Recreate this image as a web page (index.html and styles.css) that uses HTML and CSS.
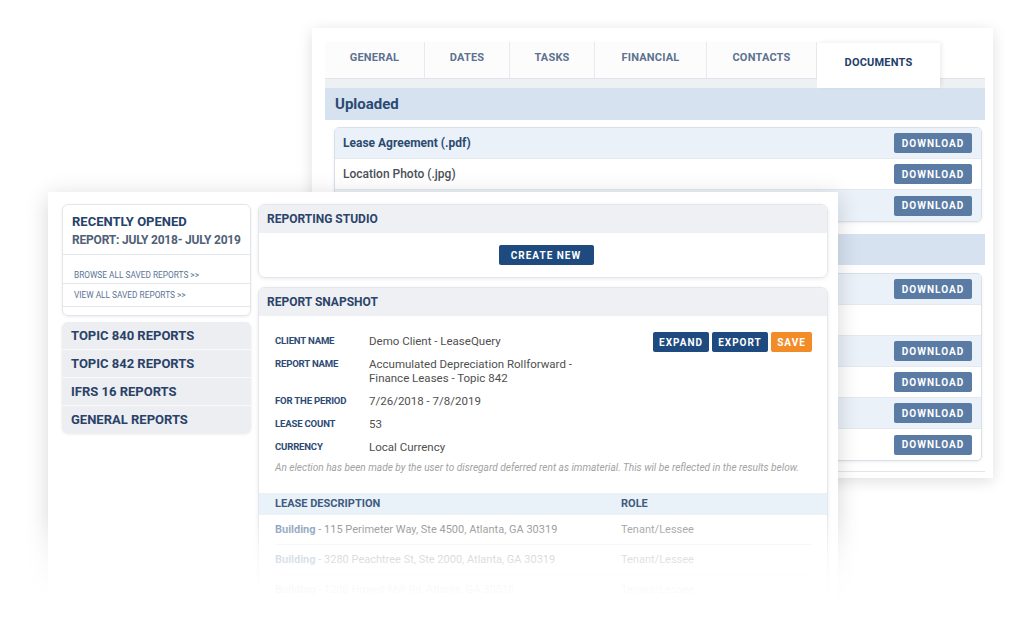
FILE: index.html
```html
<!DOCTYPE html>
<html lang="en">
<head>
    <meta charset="UTF-8">
    <meta name="viewport" content="width=device-width, initial-scale=1.0">
    <title>Reporting Studio</title>
    <link rel="stylesheet" href="styles.css">
</head>
<body>
    <div class="stage">

        <!-- Lease detail window (behind) -->
        <section class="window window-back">
            <nav class="tabs">
                <div class="tab tab-general">GENERAL</div>
                <div class="tab tab-dates">DATES</div>
                <div class="tab tab-tasks">TASKS</div>
                <div class="tab tab-financial">FINANCIAL</div>
                <div class="tab tab-contacts">CONTACTS</div>
                <div class="tab tab-documents active">DOCUMENTS</div>
            </nav>
            <div class="tab-strip"></div>

            <div class="doc-panel">
                <h2 class="panel-title">Uploaded</h2>
                <div class="file-list">
                    <div class="file-row">
                        <span class="file-name strong">Lease Agreement (.pdf)</span>
                        <button class="btn-download">DOWNLOAD</button>
                    </div>
                    <div class="file-row">
                        <span class="file-name">Location Photo (.jpg)</span>
                        <button class="btn-download">DOWNLOAD</button>
                    </div>
                    <div class="file-row">
                        <span class="file-name"></span>
                        <button class="btn-download">DOWNLOAD</button>
                    </div>
                </div>

                <!-- these rows sit under the front window, only their buttons show -->
                <h2 class="panel-title second"></h2>
                <div class="file-list">
                    <div class="file-row">
                        <span class="file-name"></span>
                        <button class="btn-download">DOWNLOAD</button>
                    </div>
                    <div class="file-row">
                        <span class="file-name"></span>
                    </div>
                    <div class="file-row">
                        <span class="file-name"></span>
                        <button class="btn-download">DOWNLOAD</button>
                    </div>
                    <div class="file-row">
                        <span class="file-name"></span>
                        <button class="btn-download">DOWNLOAD</button>
                    </div>
                    <div class="file-row">
                        <span class="file-name"></span>
                        <button class="btn-download">DOWNLOAD</button>
                    </div>
                    <div class="file-row">
                        <span class="file-name"></span>
                        <button class="btn-download">DOWNLOAD</button>
                    </div>
                </div>
            </div>
            <div class="window-foot"></div>
        </section>

        <!-- Reporting window (front) -->
        <section class="window window-front">
            <aside class="sidebar">
                <div class="recent-card">
                    <div class="recent-head">
                        <div class="recent-title">RECENTLY OPENED</div>
                        <div class="recent-report">REPORT: JULY 2018- JULY 2019</div>
                    </div>
                    <a class="recent-link first" href="#">BROWSE ALL SAVED REPORTS &gt;&gt;</a>
                    <a class="recent-link" href="#">VIEW ALL SAVED REPORTS &gt;&gt;</a>
                </div>

                <div class="topics-card">
                    <div class="topic">TOPIC 840 REPORTS</div>
                    <div class="topic">TOPIC 842 REPORTS</div>
                    <div class="topic">IFRS 16 REPORTS</div>
                    <div class="topic">GENERAL REPORTS</div>
                </div>
            </aside>

            <main class="main">
                <div class="card">
                    <div class="card-head">REPORTING STUDIO</div>
                    <div class="studio-body">
                        <button class="btn btn-navy btn-create">CREATE NEW</button>
                    </div>
                </div>

                <div class="card">
                    <div class="card-head">REPORT SNAPSHOT</div>
                    <div class="snapshot-body">
                        <div class="snapshot-top">
                            <div class="details">
                                <div class="label">CLIENT NAME</div>
                                <div class="value">Demo Client - LeaseQuery</div>
                                <div class="label">REPORT NAME</div>
                                <div class="value">Accumulated Depreciation Rollforward -<br>Finance Leases - Topic 842</div>
                                <div class="label">FOR THE PERIOD</div>
                                <div class="value">7/26/2018 - 7/8/2019</div>
                                <div class="label">LEASE COUNT</div>
                                <div class="value">53</div>
                                <div class="label">CURRENCY</div>
                                <div class="value">Local Currency</div>
                            </div>
                            <div class="actions">
                                <button class="btn btn-navy btn-expand">EXPAND</button>
                                <button class="btn btn-navy btn-export">EXPORT</button>
                                <button class="btn btn-orange btn-save">SAVE</button>
                            </div>
                        </div>
                        <p class="note">An election has been made by the user to disregard deferred rent as immaterial. This wil be reflected in the results below.</p>

                        <div class="lease-table">
                            <div class="lease-head">
                                <span>LEASE DESCRIPTION</span>
                                <span>ROLE</span>
                            </div>
                            <div class="lease-row">
                                <span><b>Building</b> - 115 Perimeter Way, Ste 4500, Atlanta, GA 30319</span>
                                <span class="role">Tenant/Lessee</span>
                            </div>
                            <div class="lease-row">
                                <span><b>Building</b> - 3280 Peachtree St, Ste 2000, Atlanta, GA 30319</span>
                                <span class="role">Tenant/Lessee</span>
                            </div>
                            <div class="lease-row">
                                <span><b>Building</b> - 1200 Howell Mill Rd, Atlanta, GA 30318</span>
                                <span class="role">Tenant/Lessee</span>
                            </div>
                        </div>
                    </div>
                </div>
            </main>
        </section>

        <div class="fade"></div>
    </div>
</body>
</html>
```

FILE: styles.css
```css
body {
    margin: 0;
    background: #fff;
    font-family: Roboto, "Liberation Sans", Arial, sans-serif;
}

.stage {
    position: relative;
    width: 1024px;
    height: 635px;
    overflow: hidden;
    background: #fff;
}

.window {
    position: absolute;
    background: #fff;
    box-sizing: border-box;
}

/* ---------- back window ---------- */

.window-back {
    left: 312px;
    top: 28px;
    width: 681px;
    height: 450px;
    padding: 14px 8px 0 13px;
    box-shadow: 0 3px 14px rgba(0,0,0,0.13);
}

.tabs {
    display: flex;
    height: 36px;
}

.tab {
    height: 36px;
    padding-bottom: 5px;
    box-sizing: border-box;
    display: flex;
    align-items: center;
    justify-content: center;
    font-size: 11px;
    font-weight: 700;
    color: #5d7290;
    letter-spacing: 0.2px;
    background: #fcfcfd;
    border-right: 1px solid #e7eaee;
}

.tab-general { width: 100px; }
.tab-dates { width: 85px; }
.tab-tasks { width: 85px; }
.tab-financial { width: 112px; }
.tab-contacts { width: 110px; }

.tab.active {
    position: relative;
    z-index: 1;
    width: 123px;
    height: 45px;
    margin-top: 1px;
    padding: 0 0 7px;
    color: #22406a;
    background: #fff;
    border-right: 0;
    box-shadow: 2px -1px 4px rgba(0,0,0,0.07);
}

.tab-strip {
    height: 10px;
    background: #eef1f4;
    border-top: 1px solid #e1e5ea;
    box-sizing: border-box;
}

.panel-title {
    margin: 0;
    height: 32px;
    line-height: 32px;
    padding-left: 10px;
    background: #d6e2f0;
    font-size: 15px;
    font-weight: 700;
    color: #2b4a72;
}

.panel-title.second {
    height: 31px;
    line-height: 31px;
    margin-top: 12px;
}

.file-list {
    margin: 7px 3px 0 9px;
    border: 1px solid #d9e0e8;
    border-radius: 5px;
    box-shadow: 0 1px 3px rgba(0,0,0,0.07);
    overflow: hidden;
}

.panel-title.second + .file-list {
    margin-top: 8px;
}

.file-row {
    height: 31px;
    padding: 0 9px 0 8px;
    display: flex;
    align-items: center;
    justify-content: space-between;
    border-bottom: 1px solid #e4e9ef;
    box-sizing: border-box;
}

.file-row:nth-child(odd) {
    background: #eaf1f9;
}

.file-row:last-child {
    border-bottom: 0;
}

.file-name {
    font-size: 12px;
    font-weight: 500;
    color: #4b5058;
}

.file-name.strong {
    font-weight: 700;
    color: #2c4a70;
}

.btn-download {
    width: 78px;
    height: 20px;
    padding: 0;
    border: 0;
    border-radius: 2px;
    background: #5a7ba4;
    color: #fff;
    font-family: inherit;
    font-size: 10px;
    font-weight: 700;
    letter-spacing: 1px;
}

.window-foot {
    margin-top: 10px;
    border-top: 1px solid #e3e6ea;
}

/* ---------- front window ---------- */

.window-front {
    left: 48px;
    top: 192px;
    width: 790px;
    height: 443px;
    padding: 12px 10px 0 14px;
    display: flex;
    align-items: flex-start;
    gap: 7px;
    box-shadow: 0 4px 22px rgba(0,0,0,0.16);
}

.sidebar {
    width: 189px;
    display: flex;
    flex-direction: column;
    gap: 6px;
}

.recent-card {
    border: 1px solid #e2e6eb;
    border-radius: 6px;
    box-shadow: 0 1px 3px rgba(0,0,0,0.08);
    padding-bottom: 8px;
}

.recent-head {
    padding: 8px 6px 5px 9px;
    border-bottom: 1px solid #e3e7ec;
    font-weight: 700;
    line-height: 18px;
    white-space: nowrap;
}

.recent-title {
    font-size: 13px;
    color: #26416a;
}

.recent-report {
    font-size: 12px;
    letter-spacing: -0.2px;
    color: #506077;
}

.recent-link {
    display: block;
    height: 22px;
    line-height: 22px;
    padding: 0 11px;
    border-bottom: 1px solid #e3e7ec;
    font-size: 8.3px;
    color: #5a7396;
    text-decoration: none;
    white-space: nowrap;
}

.recent-link.first {
    height: 29px;
    line-height: 12px;
    padding-top: 14px;
    box-sizing: border-box;
}

.topics-card {
    background: #eceef1;
    border-radius: 6px;
    box-shadow: 0 1px 3px rgba(0,0,0,0.1);
}

.topic {
    height: 27px;
    line-height: 28px;
    padding-left: 9px;
    border-bottom: 1px solid #f8f9fa;
    font-size: 13px;
    font-weight: 700;
    color: #2a4168;
}

.topic:last-child {
    border-bottom: 0;
}

.main {
    flex: 1;
    display: flex;
    flex-direction: column;
    gap: 9px;
}

.card {
    border: 1px solid #e3e6ea;
    border-radius: 7px;
    box-shadow: 0 1px 4px rgba(0,0,0,0.08);
    overflow: hidden;
}

.card-head {
    height: 28px;
    line-height: 29px;
    padding-left: 8px;
    background: #eef0f3;
    font-size: 12px;
    font-weight: 700;
    color: #2b4469;
}

.studio-body {
    height: 44px;
    display: flex;
    align-items: center;
    justify-content: center;
}

.btn {
    height: 20px;
    padding: 0;
    border: 0;
    border-radius: 2px;
    color: #fff;
    font-family: inherit;
    font-size: 10px;
    font-weight: 700;
    letter-spacing: 1px;
}

.btn-navy { background: #1e4a7f; }
.btn-orange { background: #f28c28; }

.btn-create { width: 95px; margin-left: 6px; }
.btn-expand { width: 56px; }
.btn-export { width: 56px; }
.btn-save { width: 41px; }

.snapshot-body {
    padding: 16px 15px 0 16px;
}

.snapshot-top {
    display: flex;
    justify-content: space-between;
    align-items: flex-start;
}

.details {
    padding-top: 2px;
    display: grid;
    grid-template-columns: 94px auto;
    row-gap: 9px;
    line-height: 14px;
}

.label {
    font-size: 9.6px;
    font-weight: 700;
    color: #2d4b75;
    letter-spacing: -0.2px;
    white-space: nowrap;
}

.value {
    font-size: 11.5px;
    color: #4f4f4f;
}

.actions {
    display: flex;
    gap: 3px;
}

.note {
    margin: 7px 0 0;
    line-height: 13px;
    font-size: 10.1px;
    font-style: italic;
    color: #a2a2a2;
    white-space: nowrap;
}

.lease-table {
    margin: 19px -15px 0 -16px;
}

.lease-head {
    height: 22px;
    line-height: 22px;
    padding-left: 16px;
    display: grid;
    grid-template-columns: 346px auto;
    background: #e9f1f9;
    font-size: 11px;
    font-weight: 700;
    color: #3f5b7f;
}

.lease-row {
    height: 29px;
    line-height: 30px;
    margin: 0 16px;
    display: grid;
    grid-template-columns: 346px auto;
    border-bottom: 1px solid #eceff2;
    font-size: 11px;
    color: #7a7a7a;
}

.lease-row b {
    color: #6d89ab;
}

.lease-row .role {
    color: #8a8a8a;
}

/* bottom of the front window fades into the page */
.fade {
    position: absolute;
    left: 0;
    right: 0;
    top: 512px;
    height: 123px;
    background: linear-gradient(rgba(255,255,255,0) 0%, rgba(255,255,255,0.7) 35%, rgba(255,255,255,0.95) 60%, #fff 80%);
}
```
